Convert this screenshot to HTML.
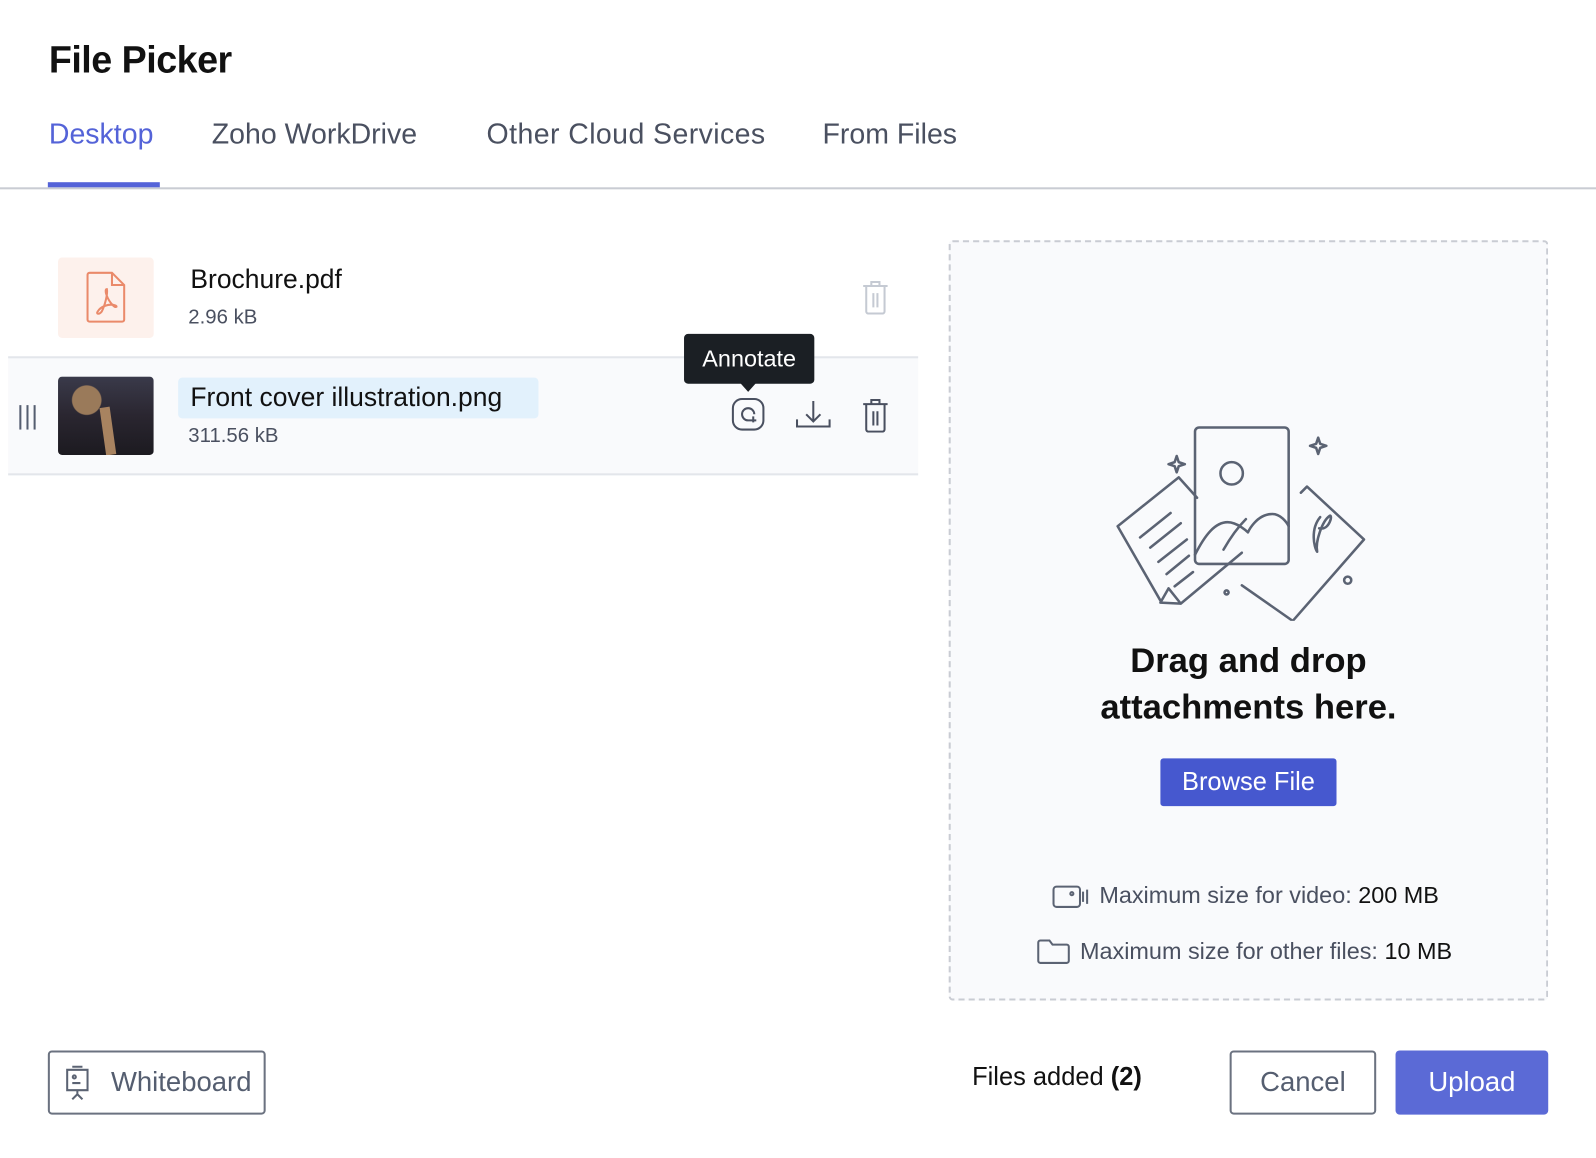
<!DOCTYPE html>
<html><head><meta charset="utf-8"><style>
*{box-sizing:border-box;margin:0;padding:0}
body{width:1596px;height:1158px;background:#fff;font-family:"Liberation Sans",sans-serif;position:relative;overflow:hidden;color:#111}
#w{position:absolute;left:0;top:0;width:1568px;height:1138px;transform:scale(1.0179);transform-origin:0 0}
.abs{position:absolute}
h1{position:absolute;left:48px;top:38px;font-size:37px;font-weight:bold;color:#111;letter-spacing:-0.5px}
.tab{position:absolute;top:116px;font-size:28px;color:#4a5060}
.line{position:absolute;left:0;top:184px;width:1568px;height:2px;background:#c9ccd3}
.ul{position:absolute;left:47px;top:179px;width:110px;height:5px;background:#5463d8}
.name{font-size:26px;color:#111}
.size{font-size:20px;color:#4a5060}
.btn{position:absolute;border:2px solid #6b7280;border-radius:4px;font-size:27px;color:#555e70;display:flex;align-items:center;justify-content:center}
</style></head><body><div id="w">
<h1>File Picker</h1>
<div class="tab" style="left:48px;color:#5463d8">Desktop</div>
<div class="tab" style="left:208px">Zoho WorkDrive</div>
<div class="tab" style="left:478px;letter-spacing:0.4px">Other Cloud Services</div>
<div class="tab" style="left:808px">From Files</div>
<div class="line"></div><div class="ul"></div>

<div class="abs" style="left:57px;top:253px;width:94px;height:79px;background:#fdf1ec;border-radius:4px"></div>
<svg class="abs" style="left:84px;top:266px" width="42" height="52" viewBox="0 0 42 52" fill="none" stroke="#ea8a6a" stroke-width="2"><path d="M4 2h22l12 12v34a2 2 0 0 1-2 2H4a2 2 0 0 1-2-2V4a2 2 0 0 1 2-2z"/><path d="M26 2v12h12"/><path d="M21 18c-3 0 0 10 6 16 3 3 5 1 2 0-6-2-14 1-17 6-2 3 2 3 4 0 3-6 6-17 5-22z"/></svg>
<div class="abs name" style="left:187px;top:259px">Brochure.pdf</div>
<div class="abs size" style="left:185px;top:301px">2.96 kB</div>
<svg class="abs" style="left:846px;top:275px" width="28" height="34" viewBox="0 0 28 34" fill="none" stroke="#c5cad3" stroke-width="2"><path d="M2 6h24M10 6V2h8v4M5 6v25a2 2 0 0 0 2 2h14a2 2 0 0 0 2-2V6M12 13v14M16 13v14"/></svg>

<div class="abs" style="left:8px;top:350px;width:894px;height:117px;background:#f9fafc;border-top:2px solid #e3e6eb;border-bottom:2px solid #e3e6eb"></div>
<div class="abs" style="left:19px;top:398px;width:16px;height:24px;border-left:2px solid #555e70;border-right:2px solid #555e70"><div style="margin:0 auto;width:2px;height:24px;background:#555e70"></div></div>
<div class="abs" style="left:57px;top:370px;width:94px;height:77px;border-radius:4px;background:radial-gradient(circle at 30% 30%,#9a7a5a 0 14px,transparent 15px),linear-gradient(180deg,#3a3a4a,#2a2630 50%,#1c1a20);overflow:hidden"><div style="position:absolute;left:44px;top:30px;width:10px;height:47px;background:#a88360;transform:rotate(-8deg)"></div></div>
<div class="abs" style="left:175px;top:371px;width:354px;height:40px;background:#e2f1fc;border-radius:4px"></div>
<div class="abs name" style="left:187px;top:375px">Front cover illustration.png</div>
<div class="abs size" style="left:185px;top:417px">311.56 kB</div>
<div class="abs" style="left:672px;top:328px;width:128px;height:49px;background:#1b1f24;border-radius:4px;color:#fff;font-size:23px;display:flex;align-items:center;justify-content:center">Annotate</div>
<div class="abs" style="left:727px;top:376px;width:0;height:0;border-left:8px solid transparent;border-right:8px solid transparent;border-top:9px solid #1b1f24"></div>
<svg class="abs" style="left:718px;top:390px" width="34" height="34" viewBox="0 0 34 34" fill="none" stroke="#4a5060" stroke-width="2"><rect x="2" y="2" width="30" height="30" rx="9"/><path d="M23 17a6 6 0 1 0-6 6h8M22 19v6"/></svg>
<svg class="abs" style="left:781px;top:392px" width="36" height="30" viewBox="0 0 36 30" fill="none" stroke="#4a5060" stroke-width="2"><path d="M18 2v20M11 15l7 7 7-7M2 20v7h32v-7"/></svg>
<svg class="abs" style="left:846px;top:391px" width="28" height="34" viewBox="0 0 28 34" fill="none" stroke="#4a5060" stroke-width="2"><path d="M2 6h24M10 6V2h8v4M5 6v25a2 2 0 0 0 2 2h14a2 2 0 0 0 2-2V6M12 13v14M16 13v14"/></svg>

<div class="abs" style="left:932px;top:236px;width:589px;height:747px;border:2px dashed #c9ccd3;border-radius:4px;background:#f9fafc"></div>
<svg class="abs" style="left:1090px;top:410px" width="260" height="200" viewBox="0 0 260 200" fill="none" stroke="#5b6373" stroke-width="2.5" stroke-linejoin="round" stroke-linecap="round">
<path d="M8 107l60-48 18 20M50 180l-42-73" />
<path d="M70 183l-20-1 8-14 12 15zM70 183l60-50" />
<path d="M30 118l30-24M40 128l30-24M48 142l28-22M56 154l22-18M64 166l18-14"/>
<path d="M130 165l50 35 70-80-56-52-6 6"/>
<rect x="84" y="10" width="92" height="134" rx="4"/>
<circle cx="120" cy="55" r="11"/>
<path d="M84 135c10-20 20-32 32-32 10 0 20 10 20 10s8-18 24-18c8 0 14 8 16 12M112 130c8-14 14-22 22-30"/>
<path d="M207 98c-10 12-6 30 -3 34-2-10 5-30 12-35 4-3 0 15-10 12"/>
<path d="M66 38l2 6 6 2-6 2-2 6-2-6-6-2 6-2z M205 20l2 6 6 2-6 2-2 6-2-6-6-2 6-2z"/>
<circle cx="234" cy="160" r="3.5"/><circle cx="115" cy="172" r="2"/>
</svg>
<div class="abs" style="left:932px;top:626px;width:589px;text-align:center;font-size:34px;font-weight:bold;line-height:46px;color:#111">Drag and drop<br>attachments here.</div>
<div class="abs" style="left:1140px;top:745px;width:173px;height:47px;background:#4658cf;color:#fff;font-size:25px;border-radius:3px;display:flex;align-items:center;justify-content:center">Browse File</div>
<svg class="abs" style="left:1033px;top:869px" width="38" height="24" viewBox="0 0 38 24" fill="none" stroke="#5b6373" stroke-width="2"><rect x="2" y="2" width="26" height="20" rx="3"/><circle cx="20" cy="9" r="1.5"/><path d="M31 7v10M35 5v14"/></svg>
<div class="abs" style="left:1080px;top:866px;font-size:23px;color:#4a5060">Maximum size for video: <span style="color:#111">200 MB</span></div>
<svg class="abs" style="left:1018px;top:922px" width="34" height="26" viewBox="0 0 34 26" fill="none" stroke="#5b6373" stroke-width="2"><path d="M2 4a2 2 0 0 1 2-2h9l3 4h14a2 2 0 0 1 2 2v14a2 2 0 0 1-2 2H4a2 2 0 0 1-2-2z"/></svg>
<div class="abs" style="left:1061px;top:921px;font-size:23px;color:#4a5060">Maximum size for other files: <span style="color:#111">10 MB</span></div>

<div class="btn" style="left:47px;top:1032px;width:214px;height:63px;justify-content:flex-start;padding-left:60px">Whiteboard</div>
<svg class="abs" style="left:62px;top:1046px" width="28" height="36" viewBox="0 0 28 36" fill="none" stroke="#5b6373" stroke-width="2"><path d="M9 2h10M4 5h20v20H4zM14 25v4M9 34l5-5 5 5"/><circle cx="11" cy="12" r="1.5"/><path d="M9 18h8"/></svg>
<div class="abs" style="left:955px;top:1044px;font-size:25px;color:#111">Files added <b>(2)</b></div>
<div class="btn" style="left:1208px;top:1032px;width:144px;height:63px">Cancel</div>
<div class="abs" style="left:1371px;top:1032px;width:150px;height:63px;background:#5b6ad6;border-radius:4px;color:#fff;font-size:27px;display:flex;align-items:center;justify-content:center">Upload</div>
</div></body></html>
